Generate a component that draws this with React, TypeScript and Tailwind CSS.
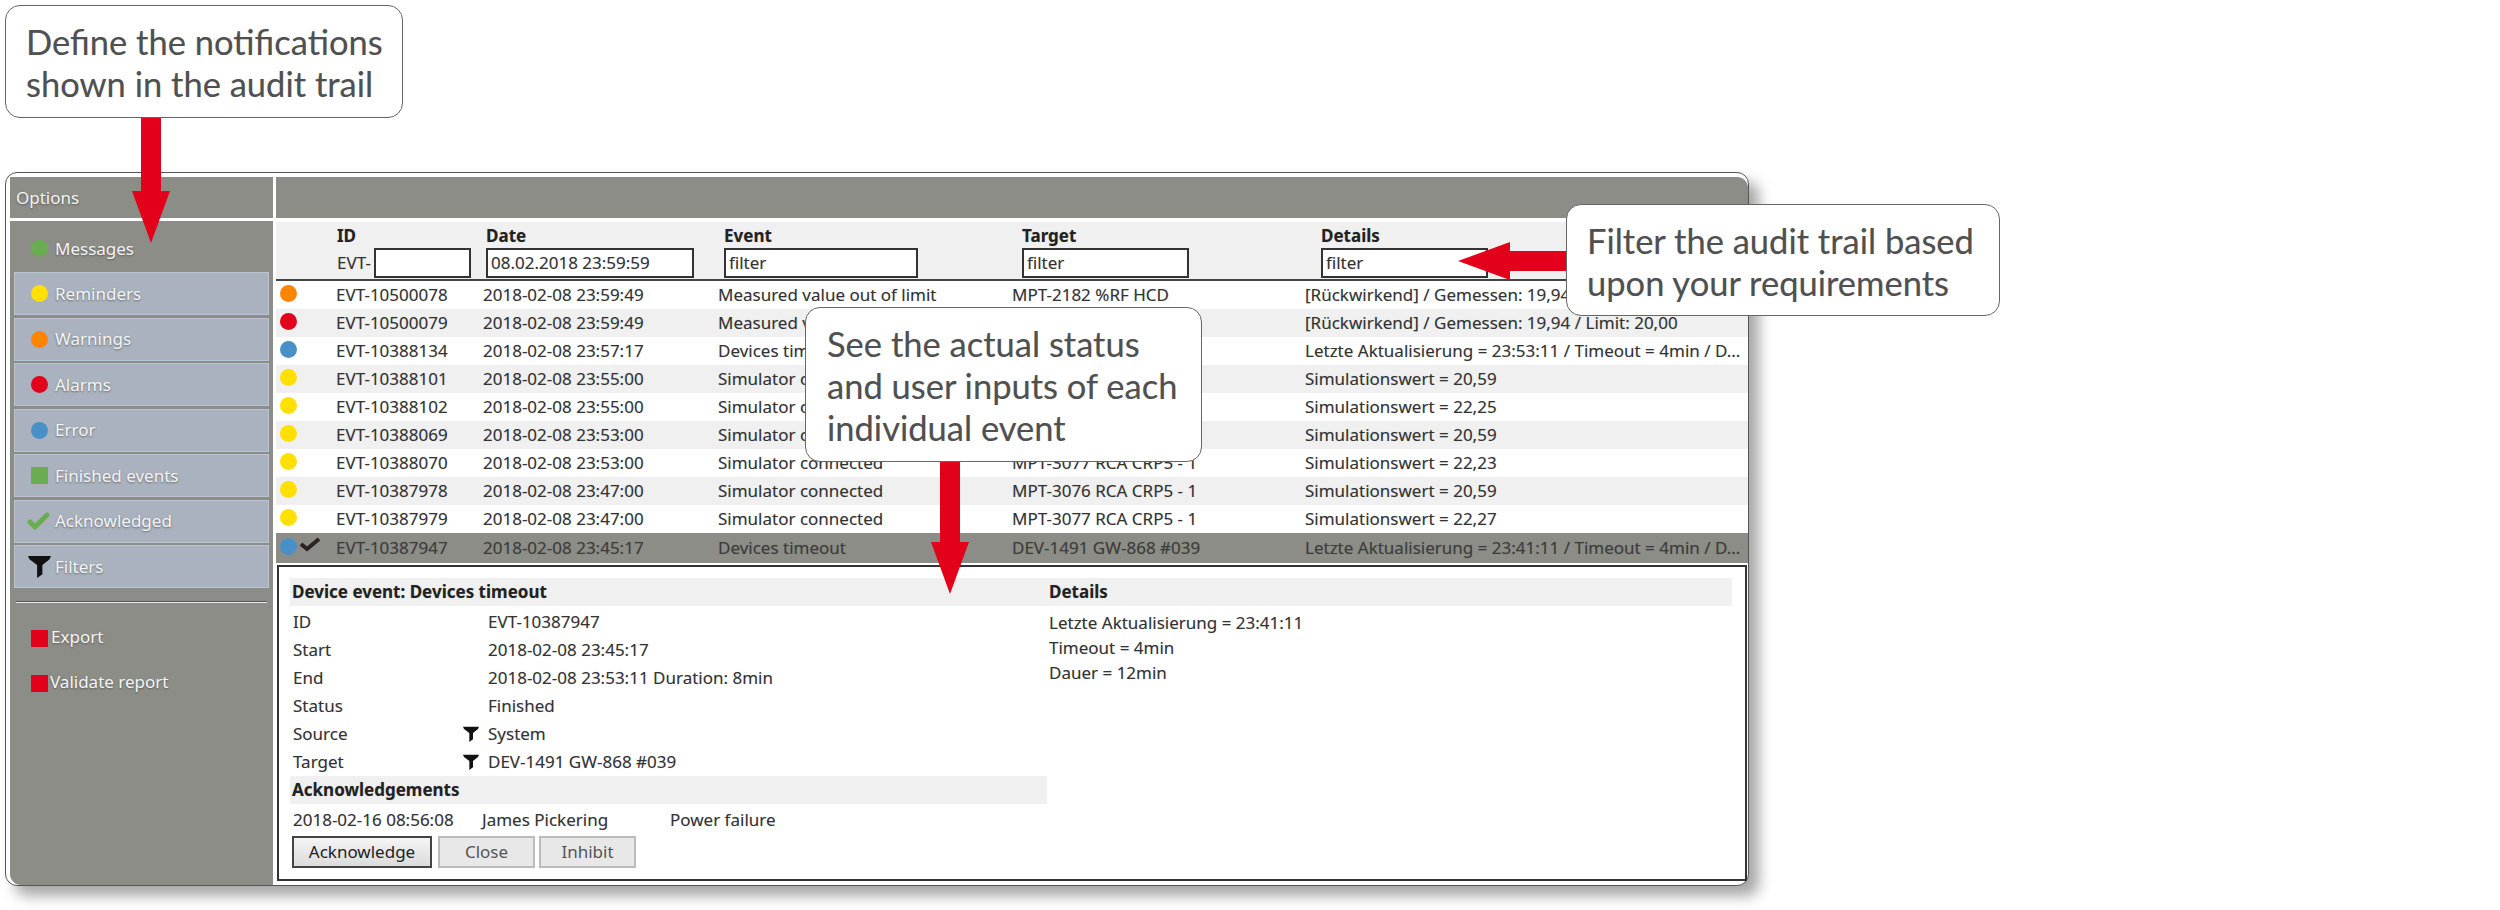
const uiFont = "font-['Noto_Sans','Open_Sans',sans-serif]";

type Level = "orange" | "red" | "blue" | "yellow";

const dotColor: Record<Level, string> = {
  orange: "bg-[#ff8400]",
  red: "bg-[#e2001a]",
  blue: "bg-[#4a90c8]",
  yellow: "bg-[#ffe000]",
};

const rows: { level: Level; id: string; date: string; event: string; target: string; details: string }[] = [
  { level: "orange", id: "EVT-10500078", date: "2018-02-08 23:59:49", event: "Measured value out of limit", target: "MPT-2182 %RF HCD", details: "[Rückwirkend] / Gemessen: 19,94 / Limit: 20,00" },
  { level: "red", id: "EVT-10500079", date: "2018-02-08 23:59:49", event: "Measured value out of limit", target: "MPT-2182 %RF HCD", details: "[Rückwirkend] / Gemessen: 19,94 / Limit: 20,00" },
  { level: "blue", id: "EVT-10388134", date: "2018-02-08 23:57:17", event: "Devices timeout", target: "DEV-1491 GW-868 #039", details: "Letzte Aktualisierung = 23:53:11 / Timeout = 4min / D..." },
  { level: "yellow", id: "EVT-10388101", date: "2018-02-08 23:55:00", event: "Simulator connected", target: "MPT-3076 RCA CRP5 - 1", details: "Simulationswert = 20,59" },
  { level: "yellow", id: "EVT-10388102", date: "2018-02-08 23:55:00", event: "Simulator connected", target: "MPT-3077 RCA CRP5 - 1", details: "Simulationswert = 22,25" },
  { level: "yellow", id: "EVT-10388069", date: "2018-02-08 23:53:00", event: "Simulator connected", target: "MPT-3076 RCA CRP5 - 1", details: "Simulationswert = 20,59" },
  { level: "yellow", id: "EVT-10388070", date: "2018-02-08 23:53:00", event: "Simulator connected", target: "MPT-3077 RCA CRP5 - 1", details: "Simulationswert = 22,23" },
  { level: "yellow", id: "EVT-10387978", date: "2018-02-08 23:47:00", event: "Simulator connected", target: "MPT-3076 RCA CRP5 - 1", details: "Simulationswert = 20,59" },
  { level: "yellow", id: "EVT-10387979", date: "2018-02-08 23:47:00", event: "Simulator connected", target: "MPT-3077 RCA CRP5 - 1", details: "Simulationswert = 22,27" },
];

const Funnel = ({ className }: { className: string }) => (
  <svg viewBox="0 0 24 24" className={className} fill="currentColor">
    <path d="M0 1h24l-1.5 3.5L15 10.5V20l-5.5 4V10.5L1.5 4.5z" />
  </svg>
);

const Dot = ({ color }: { color: string }) => (
  <span className={`block h-[17px] w-[17px] shrink-0 rounded-full ${color}`} />
);

const NavButton = ({ icon, label }: { icon: React.ReactNode; label: string }) => (
  <div className="flex h-[43px] items-center border border-[#b9c4d2] bg-[#a9b2be] text-[#f4f4f4]">
    <span className="flex w-[33px] shrink-0 justify-end">{icon}</span>
    <span className="ml-[7px] [text-shadow:0_1px_2px_rgba(60,60,60,0.6)]">{label}</span>
  </div>
);

const FilterInput = ({ value, width }: { value: string; width: string }) => (
  <div className={`flex h-[30px] items-center border-2 border-[#333] bg-white pl-[3px] ${width}`}>{value}</div>
);

const HeadCell = ({ title, children }: { title: string; children: React.ReactNode }) => (
  <div className="flex flex-col">
    <div className="h-[26px] leading-[28px] font-bold text-[#222]">{title}</div>
    {children}
  </div>
);

const Row = ({ label, value, filter }: { label: string; value: string; filter?: boolean }) => (
  <div className="grid h-[28px] grid-cols-[170px_25px_1fr] items-center">
    <span>{label}</span>
    <span>{filter && <Funnel className="h-[16px] w-[16px] text-[#111]" />}</span>
    <span>{value}</span>
  </div>
);

const Callout = ({ className, lines }: { className: string; lines: string[] }) => (
  <div className={`absolute rounded-[15px] border border-[#666] bg-white pt-[15px] font-['Lato',sans-serif] text-[34.5px] leading-[42px] text-[#505050] ${className}`}>
    {lines.map((line) => (
      <div key={line}>{line}</div>
    ))}
  </div>
);

export default function App() {
  return (
    <div className={`relative h-[910px] w-[2500px] overflow-hidden bg-white pt-[172px] pl-[5px] ${uiFont} text-[17px] text-[#333] [text-shadow:0_0_1px_rgba(0,0,0,0.2)]`}>
      <div className="flex h-[714px] w-[1744px] rounded-[12px] border border-[#555] bg-white pt-[4px] pl-[4px] shadow-[10px_10px_14px_rgba(0,0,0,0.35)]">
        <aside className="flex w-[263px] shrink-0 flex-col gap-[3px] overflow-hidden rounded-bl-[11px]">
          <div className="flex h-[41px] items-center bg-[#8d8d87] pl-[6px] text-[#f4f4f4] [text-shadow:0_1px_2px_rgba(60,60,60,0.6)]">
            Options
          </div>
          <div className="flex flex-1 flex-col bg-[#8d8d87] px-[4px] text-[#f4f4f4]">
            <div className="flex h-[51px] shrink-0 items-center pt-[4px]">
              <span className="flex w-[34px] shrink-0 justify-end">
                <Dot color="bg-[#69ad50]" />
              </span>
              <span className="ml-[7px] [text-shadow:0_1px_2px_rgba(60,60,60,0.6)]">Messages</span>
            </div>
            <div className="flex flex-col gap-[2.5px]">
              <NavButton icon={<Dot color={dotColor.yellow} />} label="Reminders" />
              <NavButton icon={<Dot color={dotColor.orange} />} label="Warnings" />
              <NavButton icon={<Dot color={dotColor.red} />} label="Alarms" />
              <NavButton icon={<Dot color={dotColor.blue} />} label="Error" />
              <NavButton icon={<span className="block h-[17px] w-[17px] bg-[#69ad50]" />} label="Finished events" />
              <NavButton
                icon={
                  <svg viewBox="0 0 23 18" className="-mr-[2px] h-[18px] w-[23px]" fill="none" stroke="#69ad50" strokeWidth="5" strokeLinecap="round" strokeLinejoin="round">
                    <path d="M3 10l5 5L20 3" />
                  </svg>
                }
                label="Acknowledged"
              />
              <NavButton icon={<Funnel className="-mr-[3px] h-[23px] w-[23px] text-[#111]" />} label="Filters" />
            </div>
            <div className="mx-[2px] mt-[13px] h-[2px] shrink-0 border-t border-b border-t-[#555] border-b-[#eee]" />
            <div className="mt-[26px] flex h-[18px] items-center pl-[17px]">
              <span className="block h-[17px] w-[17px] bg-[#e2001a]" />
              <span className="-mt-[3px] ml-[3px] [text-shadow:0_1px_2px_rgba(60,60,60,0.6)]">Export</span>
            </div>
            <div className="mt-[27px] flex h-[18px] items-center pl-[17px]">
              <span className="block h-[17px] w-[17px] bg-[#e2001a]" />
              <span className="-mt-[3px] ml-[2px] [text-shadow:0_1px_2px_rgba(60,60,60,0.6)]">Validate report</span>
            </div>
          </div>
        </aside>

        <main className="ml-[3px] flex min-w-0 flex-1 flex-col">
          <div className="h-[41px] shrink-0 rounded-tr-[11px] bg-[#8d8d87]" />
          <div className="mt-[4px] grid h-[59px] shrink-0 grid-cols-[61px_149px_238px_298px_299px_1fr] border-b-2 border-[#444] bg-[#f0f0f0]">
            <div />
            <HeadCell title="ID">
              <div className="flex items-center">
                EVT-
                <FilterInput value="" width="ml-[3px] w-[97px]" />
              </div>
            </HeadCell>
            <HeadCell title="Date">
              <FilterInput value="08.02.2018 23:59:59" width="w-[208px]" />
            </HeadCell>
            <HeadCell title="Event">
              <FilterInput value="filter" width="w-[194px]" />
            </HeadCell>
            <HeadCell title="Target">
              <FilterInput value="filter" width="w-[167px]" />
            </HeadCell>
            <HeadCell title="Details">
              <FilterInput value="filter" width="w-[167px]" />
            </HeadCell>
          </div>

          {rows.map((row, index) => (
            <div
              key={row.id}
              className={`grid h-[28px] shrink-0 grid-cols-[60px_147px_235px_294px_293px_1fr] items-center whitespace-nowrap ${index % 2 === 1 ? "bg-[#f0f0f0]" : "bg-white"}`}
            >
              <span className="-mt-[3px] pl-[4px]">
                <Dot color={dotColor[row.level]} />
              </span>
              <span>{row.id}</span>
              <span>{row.date}</span>
              <span>{row.event}</span>
              <span>{row.target}</span>
              <span>{row.details}</span>
            </div>
          ))}
          <div className="grid h-[30px] shrink-0 grid-cols-[60px_147px_235px_294px_293px_1fr] items-center bg-[#8d8d87] whitespace-nowrap text-[#3d3d3d]">
            <span className="-mt-[3px] flex items-center pl-[4px]">
              <Dot color={dotColor.blue} />
              <svg viewBox="0 0 21 15" className="-mt-[4px] ml-[2px] h-[15px] w-[21px]" fill="none" stroke="#2b2222" strokeWidth="4" strokeLinejoin="miter">
                <path d="M2 7l6 5L20 2" />
              </svg>
            </span>
            <span>EVT-10387947</span>
            <span>2018-02-08 23:45:17</span>
            <span>Devices timeout</span>
            <span>DEV-1491 GW-868 #039</span>
            <span>Letzte Aktualisierung = 23:41:11 / Timeout = 4min / D...</span>
          </div>

          <section className="mx-[1px] mt-[2px] flex h-[316px] flex-col border-2 border-[#333] bg-white pt-[11px] pr-[13px] pl-[11px]">
            <div className="flex">
              <div className="w-[757px] shrink-0">
                <div className="flex h-[28px] items-center bg-[#f0f0f0] pl-[2px] font-bold text-[#222]">Device event: Devices timeout</div>
                <div className="pt-[2px] pl-[3px]">
                  <Row label="ID" value="EVT-10387947" />
                  <Row label="Start" value="2018-02-08 23:45:17" />
                  <Row label="End" value="2018-02-08 23:53:11 Duration: 8min" />
                  <Row label="Status" value="Finished" />
                  <Row label="Source" value="System" filter />
                  <Row label="Target" value="DEV-1491 GW-868 #039" filter />
                </div>
                <div className="flex h-[28px] items-center bg-[#f0f0f0] pl-[2px] font-bold text-[#222]">Acknowledgements</div>
                <div className="grid h-[32px] grid-cols-[189px_188px_1fr] items-center pl-[3px]">
                  <span>2018-02-16 08:56:08</span>
                  <span>James Pickering</span>
                  <span>Power failure</span>
                </div>
                <div className="flex pl-[2px]">
                  <button className="h-[32px] w-[140px] border-2 border-[#444] bg-gradient-to-b from-[#f4f4f4] to-[#dcdcdc] text-[#222]">Acknowledge</button>
                  <button className="ml-[6px] h-[32px] w-[97px] border-2 border-[#bbb] bg-[#e8e8e8] text-[#555]">Close</button>
                  <button className="ml-[4px] h-[32px] w-[97px] border-2 border-[#bbb] bg-[#e8e8e8] text-[#555]">Inhibit</button>
                </div>
              </div>
              <div className="flex-1">
                <div className="flex h-[28px] items-center bg-[#f0f0f0] pl-[2px] font-bold text-[#222]">Details</div>
                <div className="flex flex-col pt-[4px] pl-[2px] leading-[25px]">
                  <span>Letzte Aktualisierung = 23:41:11</span>
                  <span>Timeout = 4min</span>
                  <span>Dauer = 12min</span>
                </div>
              </div>
            </div>
          </section>
        </main>
      </div>

      <svg className="absolute top-0 left-0 h-[910px] w-[2500px]" viewBox="0 0 2500 910" fill="#e2001a">
        <path d="M141 118h20v73h9l-19 52-19-52h9z" />
        <path d="M940 462h20v80h9l-19 52-19-52h9z" />
        <path d="M1566 251v20h-56v9l-52-19 52-19v9z" />
      </svg>

      <Callout className="top-[5px] left-[5px] h-[113px] w-[398px] pl-[20px]" lines={["Define the notifications", "shown in the audit trail"]} />
      <Callout className="top-[307px] left-[805px] h-[155px] w-[397px] pl-[21px]" lines={["See the actual status", "and user inputs of each", "individual event"]} />
      <Callout className="top-[204px] left-[1566px] h-[112px] w-[434px] pl-[20px]" lines={["Filter the audit trail based", "upon your requirements"]} />
    </div>
  );
}
